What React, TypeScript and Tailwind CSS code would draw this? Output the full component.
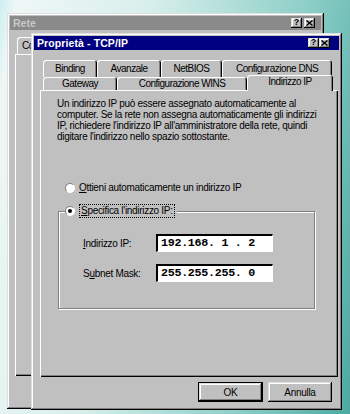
import React from 'react';

// win95 bevels
const raised =
  'shadow-[inset_-1px_-1px_#000,inset_1px_1px_#dfdfdf,inset_-2px_-2px_#808080,inset_2px_2px_#fff]';
const panelBevel = 'shadow-[inset_1px_1px_#fff,inset_-1px_-1px_#000,inset_-2px_-2px_#808080]';
const tabBevel = 'shadow-[inset_1px_1px_#fff,inset_-1px_0_#000,inset_-2px_0_#808080]';

const TitleButton = ({ kind }: { kind: 'help' | 'close' }) => (
  <div className={`w-[11px] h-[10px] bg-[#c0c0c0] flex items-center justify-center ${raised}`}>
    {kind === 'help' ? (
      <span className="text-[9px] font-bold leading-none text-black -mt-[1px]">?</span>
    ) : (
      <svg width="7" height="6" viewBox="0 0 7 6" className="-mt-[1px]">
        <path d="M0.5 0.5 L6.5 5.5 M6.5 0.5 L0.5 5.5" stroke="#000" strokeWidth="1.4" />
      </svg>
    )}
  </div>
);

const Tab = ({ label, className }: { label: string; className: string }) => (
  <div
    className={`flex items-center justify-center bg-[#c0c0c0] rounded-t-[3px] text-[10px] tracking-[-0.5px] text-black leading-none ${tabBevel} ${className}`}
  >
    {label}
  </div>
);

const Radio = ({ checked }: { checked?: boolean }) => (
  <span className="w-[10px] h-[10px] rounded-full bg-white border border-[#808080] border-r-white border-b-white flex items-center justify-center shrink-0">
    {checked && <span className="w-[4px] h-[4px] rounded-full bg-black" />}
  </span>
);

const Win95Button = ({ label, isDefault }: { label: string; isDefault?: boolean }) => (
  <div
    className={`h-[20px] bg-[#c0c0c0] flex items-center justify-center text-[10px] tracking-[-0.3px] text-black ${
      isDefault ? 'border border-black w-[65px]' : 'w-[64px]'
    }`}
  >
    <div className={`w-full h-full flex items-center justify-center ${raised}`}>{label}</div>
  </div>
);

const ipField =
  "w-[117px] h-[18px] bg-white border-t-2 border-l-2 border-t-black border-l-black border-b border-r border-b-white border-r-white flex items-center pl-[3px] font-['Liberation_Mono',monospace] font-bold text-[11.7px] text-black whitespace-pre";

const App: React.FC = () => {
  return (
    <div className="relative w-[350px] h-[414px] overflow-hidden font-['Liberation_Sans',Arial,sans-serif] bg-[linear-gradient(100deg,#cdeef0_0%,#eef7f6_4%,#d9efec_35%,#8fd0c8_72%,#4ca9a1_100%)]">
      {/* Rete window (behind) */}
      <div className={`absolute left-[7px] top-[13px] w-[317px] h-[396px] bg-[#c0c0c0] p-[3px] flex flex-col ${raised}`}>
        <div className="h-[14px] bg-[#8a8a8a] flex items-center pl-[3px] pr-[6px]">
          <span className="text-[#c8c8c8] font-bold text-[10.5px] leading-none">Rete</span>
          <div className="ml-auto flex gap-[2px]">
            <TitleButton kind="help" />
            <TitleButton kind="close" />
          </div>
        </div>
        <div className="mt-[7px] pl-[7px] flex">
          <Tab label="Co" className="w-[70px] h-[17px] justify-start pl-[5px]" />
        </div>
        <div className={`ml-[5px] mr-[5px] h-[322px] ${panelBevel}`} />
      </div>

      {/* Proprietà - TCP/IP window */}
      <div className={`absolute left-[31px] top-[33px] w-[311px] h-[377px] bg-[#c0c0c0] p-[3px] flex flex-col ${raised}`}>
        <div className="h-[14px] bg-[#000080] flex items-center pl-[3px] pr-[9px]">
          <span className="text-white font-bold text-[10.5px] tracking-[0.1px] leading-none">Proprietà - TCP/IP</span>
          <div className="ml-auto flex">
            <TitleButton kind="help" />
            <TitleButton kind="close" />
          </div>
        </div>

        {/* tabs */}
        <div className="mt-[10px] pl-[9px] flex flex-col">
          <div className="flex h-[17px]">
            <Tab label="Binding" className="w-[54px] h-[17px]" />
            <Tab label="Avanzale" className="w-[64px] h-[17px]" />
            <Tab label="NetBIOS" className="w-[61px] h-[17px]" />
            <Tab label="Configurazione DNS" className="w-[110px] h-[17px]" />
          </div>
          <div className="flex items-end h-[13px]">
            <Tab label="Gateway" className="w-[74px] h-[13px] pt-[1px]" />
            <Tab label="Configurazione WINS" className="w-[130px] h-[13px] pt-[1px]" />
            <Tab label="Indirizzo IP" className="w-[86px] h-[16px] -mb-[1px] relative z-10 pb-[2px]" />
          </div>
        </div>

        {/* panel */}
        <div className={`ml-[6px] w-[298px] h-[287px] flex flex-col text-[10px] tracking-[-0.3px] text-black ${panelBevel}`}>
          <div className="pl-[17px] pt-[8px] leading-[11px] whitespace-nowrap">
            <div>Un indirizzo IP può essere assegnato automaticamente al</div>
            <div>computer. Se la rete non assegna automaticamente gli indirizzi</div>
            <div>IP, richiedere l&apos;indirizzo IP all&apos;amministratore della rete, quindi</div>
            <div>digitare l&apos;indirizzo nello spazio sottostante.</div>
          </div>

          <div className="mt-[40px] ml-[25px] h-[12px] flex items-center gap-[4px]">
            <Radio />
            <span className="leading-none">
              <span className="underline">O</span>ttieni automaticamente un indirizzo IP
            </span>
          </div>

          <fieldset className="mt-[11px] ml-[18px] w-[257px] border border-[#808080] shadow-[1px_1px_0_#fff,inset_1px_1px_0_#fff] pb-[26px]">
            <legend className="ml-[6px] bg-[#c0c0c0] flex items-center gap-[4px] h-[12px] pr-[2px]">
              <Radio checked />
              <span className="leading-none border border-dotted border-black px-[1px] py-[1px]">
                <span className="underline">S</span>pecifica l&apos;indirizzo IP:
              </span>
            </legend>

            <div className="mt-[17px] flex items-center h-[18px]">
              <span className="ml-[24px] w-[73px]">
                <span className="underline">I</span>ndirizzo IP:
              </span>
              <div className={ipField}>192.168. 1 . 2</div>
            </div>

            <div className="mt-[12px] flex items-center h-[18px]">
              <span className="ml-[24px] w-[73px]">
                S<span className="underline">u</span>bnet Mask:
              </span>
              <div className={ipField}>255.255.255. 0</div>
            </div>
          </fieldset>
        </div>

        {/* buttons */}
        <div className="mt-[5px] flex justify-end gap-[5px] pr-[7px]">
          <Win95Button label="OK" isDefault />
          <Win95Button label="Annulla" />
        </div>
      </div>
    </div>
  );
};

export default App;
